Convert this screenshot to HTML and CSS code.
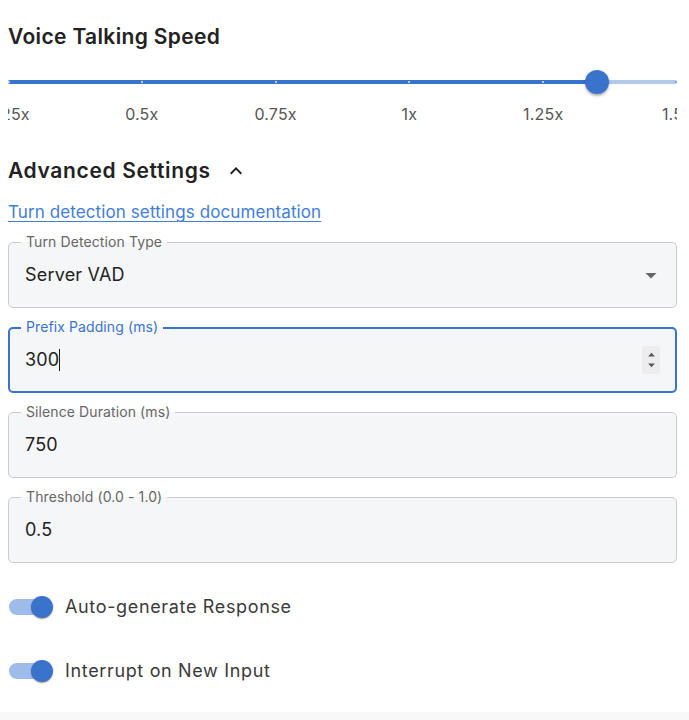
FILE: index.html
```html
<!DOCTYPE html>
<html lang="en">
<head>
<meta charset="utf-8">
<title>Voice Settings</title>
<link rel="stylesheet" href="styles.css">
</head>
<body>
<div class="page">
  <h2 class="title">Voice Talking Speed</h2>

  <div class="slider">
    <div class="rail">
      <div class="rail-line"></div>
      <div class="track" style="width:88%"></div>
      <div class="ticks">
        <span class="tick on"></span>
        <span class="tick on"></span>
        <span class="tick on"></span>
        <span class="tick on"></span>
        <span class="tick on"></span>
        <span class="tick off"></span>
      </div>
      <div class="thumb" style="left:88%"></div>
    </div>
    <div class="marks">
      <span class="mark"><span>0.25x</span></span>
      <span class="mark"><span>0.5x</span></span>
      <span class="mark"><span>0.75x</span></span>
      <span class="mark"><span>1x</span></span>
      <span class="mark"><span>1.25x</span></span>
      <span class="mark"><span>1.5x</span></span>
    </div>
  </div>

  <div class="adv">
    <h2 class="title adv-title">Advanced Settings</h2>
    <svg class="chev" viewBox="0 0 24 24" width="24" height="24"><path d="M12 8l-6 6 1.41 1.41L12 10.83l4.59 4.58L18 14z"/></svg>
  </div>

  <a class="doc" href="#">Turn detection settings documentation</a>

  <div class="fields">
    <div class="field">
      <span class="label">Turn Detection Type</span>
      <span class="value">Server VAD</span>
      <svg class="drop" viewBox="0 0 24 24" width="24" height="24"><path d="M6.5 10l5.5 5.5 5.5-5.5z"/></svg>
    </div>
    <div class="field focused">
      <span class="label">Prefix Padding (ms)</span>
      <span class="value">300<span class="caret"></span></span>
      <span class="spin">
        <svg viewBox="0 0 10 6" width="10" height="6"><path d="M1 5.5L5 1l4 4.5z"/></svg>
        <svg viewBox="0 0 10 6" width="10" height="6"><path d="M1 0.5L5 5l4-4.5z"/></svg>
      </span>
    </div>
    <div class="field">
      <span class="label">Silence Duration (ms)</span>
      <span class="value">750</span>
    </div>
    <div class="field">
      <span class="label">Threshold (0.0 - 1.0)</span>
      <span class="value">0.5</span>
    </div>
  </div>

  <div class="switches">
    <label class="switch">
      <span class="sw"><span class="sw-track"></span><span class="sw-thumb"></span></span>
      <span class="sw-label">Auto-generate Response</span>
    </label>
    <label class="switch">
      <span class="sw"><span class="sw-track"></span><span class="sw-thumb"></span></span>
      <span class="sw-label">Interrupt on New Input</span>
    </label>
  </div>

  <div class="footer"></div>
</div>
</body>
</html>
```

FILE: styles.css
```css
* { box-sizing: border-box; }
html, body { margin: 0; padding: 0; background: #fff; }
body {
  font-family: Inter, "Noto Sans", "Liberation Sans", sans-serif;
  color: #222;
  overflow: hidden;
}
.page {
  width: 689px;
  padding: 23px 12px 0 8px;
  display: flex;
  flex-direction: column;
}
.title {
  margin: 0;
  font-size: 21px;
  line-height: 28px;
  font-weight: 600;
  color: #222;
  letter-spacing: 0.35px;
}
.adv-title { letter-spacing: 0.65px; }

/* slider */
.slider {
  margin-top: 19px;
  width: 669px;
  overflow: hidden;
}
.rail {
  position: relative;
  height: 24px;
  display: flex;
  align-items: center;
}
.rail-line {
  width: 100%;
  height: 4px;
  border-radius: 2px;
  background: #b3c9ec;
}
.track {
  position: absolute;
  left: 0;
  top: 10px;
  height: 4px;
  border-radius: 2px;
  background: #3a73cc;
}
.ticks {
  position: absolute;
  left: 0;
  right: 0;
  top: 11px;
  height: 2px;
  display: flex;
  justify-content: space-between;
}
.tick {
  width: 2px;
  height: 2px;
  border-radius: 1px;
}
.tick.on { background: #e8eef9; }
.tick.off { background: #3a73cc; opacity: 0.6; }
.thumb {
  position: absolute;
  top: 0;
  width: 24px;
  height: 24px;
  margin-left: -12px;
  border-radius: 50%;
  background: #3a73cc;
  box-shadow: 0 2px 2px rgba(0,0,0,0.22), 0 1px 4px rgba(0,0,0,0.12);
}
.marks {
  margin-top: 10px;
  height: 20px;
  display: flex;
  justify-content: space-between;
  font-size: 16px;
  line-height: 20px;
  letter-spacing: 0.2px;
  color: #555;
}
.mark {
  width: 0;
  display: flex;
  justify-content: center;
  white-space: nowrap;
}

/* advanced */
.adv {
  margin-top: 33px;
  display: flex;
  align-items: center;
  gap: 13px;
}
.chev { fill: #222; }

.doc {
  margin-top: 15px;
  align-self: flex-start;
  font-size: 17px;
  line-height: 24px;
  letter-spacing: 0.1px;
  color: #3f7ddb;
  text-decoration: underline;
  text-underline-offset: 3px;
  text-decoration-thickness: 1px;
}

/* fields */
.fields {
  margin-top: 18px;
  display: flex;
  flex-direction: column;
  gap: 19px;
}
.field {
  position: relative;
  height: 66px;
  border: 1px solid #c9cbcf;
  border-radius: 5px;
  background: #f5f6f8;
  display: flex;
  align-items: center;
  padding: 0 16px 0 16px;
}
.field.focused {
  border: 2px solid #3a73cc;
  padding: 0 15px 0 15px;
}
.label {
  position: absolute;
  left: 12px;
  top: -9px;
  padding: 0 5px;
  font-size: 14px;
  line-height: 16px;
  letter-spacing: 0.1px;
  color: #666;
  background: linear-gradient(#fff 0, #fff 50%, #f5f6f8 50%, #f5f6f8 100%);
}
.field.focused .label {
  left: 11px;
  top: -10px;
  color: #3a73cc;
}
.value {
  flex: 1;
  font-size: 18px;
  line-height: 24px;
  letter-spacing: 0.2px;
  color: #222;
  display: flex;
  align-items: center;
}
.caret {
  display: inline-block;
  width: 1px;
  height: 22px;
  background: #222;
}
.drop {
  fill: #666;
  margin-right: -3px;
}
.spin {
  width: 18px;
  height: 28px;
  background: #ececee;
  border-radius: 2px;
  display: flex;
  flex-direction: column;
  align-items: center;
  justify-content: center;
  gap: 6px;
}
.spin svg { fill: #555; width: 9px; height: 5px; }

/* switches */
.switches {
  margin-top: 24px;
  display: flex;
  flex-direction: column;
  gap: 24px;
}
.switch {
  height: 40px;
  display: flex;
  align-items: center;
  gap: 12px;
}
.sw {
  position: relative;
  width: 45px;
  height: 24px;
  display: flex;
  align-items: center;
}
.sw-track {
  margin-left: 1px;
  width: 38px;
  height: 16px;
  border-radius: 8px;
  background: #9fbbe8;
}
.sw-thumb {
  position: absolute;
  right: 0;
  top: 1px;
  width: 22px;
  height: 22px;
  border-radius: 50%;
  background: #3a73cc;
  box-shadow: 0 2px 1px -1px rgba(0,0,0,0.2), 0 1px 1px rgba(0,0,0,0.14), 0 1px 3px rgba(0,0,0,0.12);
}
.sw-label {
  font-size: 18px;
  line-height: 24px;
  letter-spacing: 0.65px;
  color: #3a3a3a;
}

.footer {
  margin: 21px -12px 0 -8px;
  height: 40px;
  background: #f8f8f8;
}
```
